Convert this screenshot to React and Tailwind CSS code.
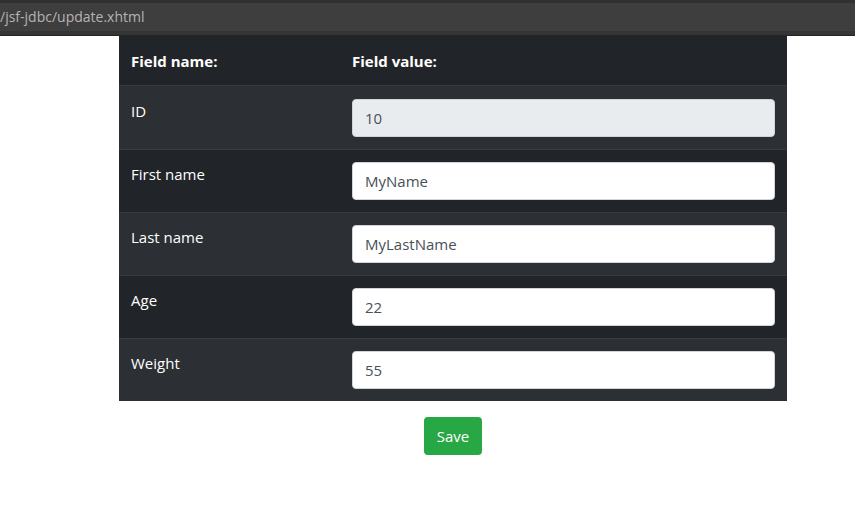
import React from "react";

const rows = [
  { label: "ID", value: "10", disabled: true },
  { label: "First name", value: "MyName" },
  { label: "Last name", value: "MyLastName" },
  { label: "Age", value: "22" },
  { label: "Weight", value: "55" },
];

export default function App() {
  return (
    <div className="w-[855px] h-[523px] bg-white overflow-hidden" style={{ fontFamily: '"Open Sans", "Noto Sans", sans-serif' }}>
      <div className="h-[36px] bg-[#303030] flex flex-col">
        <div className="h-[3px]" />
        <div className="h-[28px] bg-[#3e3e3e] flex items-center text-[14px] text-[#b4b4b4] leading-none">
          /jsf-jdbc/update.xhtml
        </div>
        <div className="h-[4px] bg-[#353535]" />
        <div className="h-[1px] bg-[#252525]" />
      </div>
      <div className="ml-[119px] w-[668px]">
        <div className="bg-[#212529] text-white">
          <div className="grid grid-cols-[221px_1fr] h-[50px] border-b border-[#373b3e] text-[15px] font-bold">
            <div className="px-3 pt-[14px]">Field name:</div>
            <div className="px-3 pt-[14px]">Field value:</div>
          </div>
          {rows.map((r, i) => (
            <div
              key={r.label}
              className={
                "grid grid-cols-[221px_1fr] border-t border-[#373b3e] " +
                (i % 2 === 0 ? "bg-[#2c3034]" : "bg-[#212529]") +
                (i === 0 ? " border-t-0 pt-[1px]" : "")
              }
            >
              <div className="px-3 pt-3 text-[15px] leading-6">{r.label}</div>
              <div className="px-3 py-3">
                <div
                  className={
                    "h-[38px] rounded-[4px] border border-[#ced4da] px-3 flex items-center text-[15px] text-[#495057] " +
                    (r.disabled ? "bg-[#e9ecef]" : "bg-white")
                  }
                >
                  {r.value}
                </div>
              </div>
            </div>
          ))}
        </div>
        <div className="flex justify-center pt-4">
          <button className="h-[38px] w-[58px] rounded-[4px] bg-[#28a745] text-white text-[15px]">Save</button>
        </div>
      </div>
    </div>
  );
}
